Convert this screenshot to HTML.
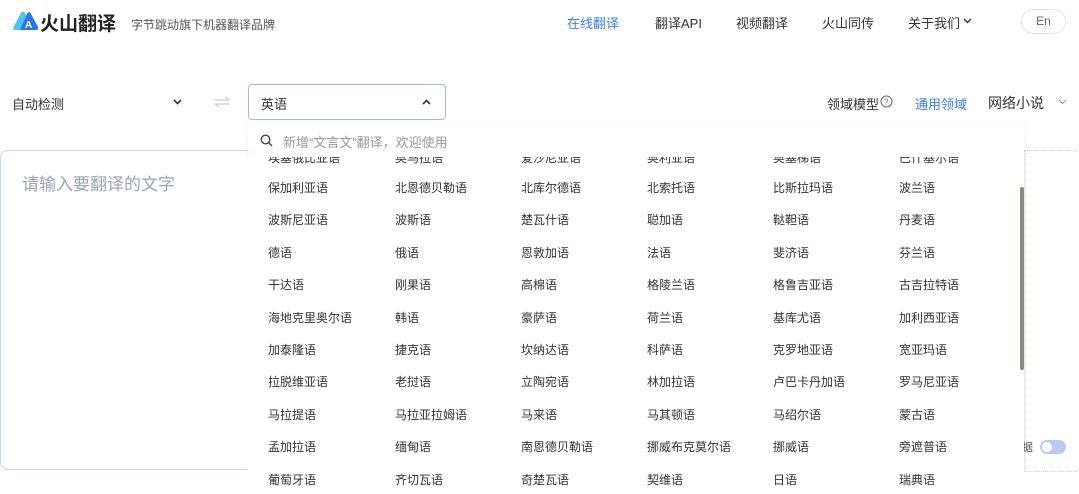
<!DOCTYPE html>
<html><head><meta charset="utf-8"><style>
*{margin:0;padding:0;box-sizing:border-box}
body{width:1079px;height:494px;overflow:hidden;background:#fff;font-family:"Liberation Sans","Noto Sans CJK SC",sans-serif;color:#333;position:relative}
.a{position:absolute;white-space:nowrap}
.nav{font-size:13px;color:#333;top:13px}
.grid{position:absolute;left:248px;top:157px;width:776px;height:337px;overflow:hidden;background:#fff}
.grid span{position:absolute;font-size:12px;color:#333;white-space:nowrap}
</style></head><body>
<svg class="a" style="left:12px;top:9px" width="27" height="23" viewBox="0 0 27 23"><path d="M3 21 Q0 21 2 17 L9 4 Q11 1 13 4 L15 8 L9 21Z" fill="#4cc4f2"/><path d="M8 21 L15 5 Q17 1 19 5 L26 18 Q27 21 24 21Z" fill="#2b74ee"/><text x="13" y="19" font-size="10" fill="#fff" font-family="Liberation Sans" font-weight="bold">A</text></svg>
<div class="a" style="left:40px;top:9px;font-size:19px;font-weight:bold;color:#222">火山翻译</div>
<div class="a" style="left:131px;top:16px;font-size:12px;color:#555">字节跳动旗下机器翻译品牌</div>
<div class="a nav" style="left:567px;color:#3b7ff0">在线翻译</div>
<div class="a nav" style="left:655px">翻译API</div>
<div class="a nav" style="left:736px">视频翻译</div>
<div class="a nav" style="left:822px">火山同传</div>
<div class="a nav" style="left:908px">关于我们</div>
<svg class="a" style="left:963px;top:18px" width="9" height="6" viewBox="0 0 9 6"><path d="M1 1L4.5 4.5L8 1" fill="none" stroke="#333" stroke-width="1.4"/></svg>
<div class="a" style="left:1021px;top:9px;width:45px;height:25px;border:1px solid #e4e4e4;border-radius:13px;font-size:12px;color:#666;text-align:center;line-height:23px">En</div>

<div class="a" style="left:12px;top:94px;font-size:13px">自动检测</div>
<svg class="a" style="left:173px;top:99px" width="9" height="6" viewBox="0 0 9 6"><path d="M1 1L4.5 4.5L8 1" fill="none" stroke="#333" stroke-width="1.6"/></svg>
<svg class="a" style="left:214px;top:96px" width="16" height="12" viewBox="0 0 16 12"><path d="M1 4H15M11 1L15 4M1 8H15M5 11L1 8" fill="none" stroke="#ccc" stroke-width="1.3"/></svg>
<div class="a" style="left:248px;top:84px;width:198px;height:36px;border:1px solid #9db8ee;border-radius:4px"></div>
<div class="a" style="left:261px;top:94px;font-size:13px">英语</div>
<svg class="a" style="left:422px;top:99px" width="9" height="6" viewBox="0 0 9 6"><path d="M1 5L4.5 1.5L8 5" fill="none" stroke="#333" stroke-width="1.6"/></svg>
<div class="a" style="left:827px;top:94px;font-size:13px">领域模型</div>
<svg class="a" style="left:880px;top:95px" width="13" height="13" viewBox="0 0 13 13"><circle cx="6.5" cy="6.5" r="5.5" fill="none" stroke="#666"/><text x="4" y="9.5" font-size="8" fill="#666" font-family="Liberation Sans">?</text></svg>
<div class="a" style="left:915px;top:94px;font-size:13px;color:#3b7ff0">通用领域</div>
<div class="a" style="left:988px;top:93px;font-size:14px">网络小说</div>
<svg class="a" style="left:1058px;top:99px" width="9" height="6" viewBox="0 0 9 6"><path d="M1 1L4.5 4.5L8 1" fill="none" stroke="#999" stroke-width="1.2"/></svg>

<div class="a" style="left:0;top:150px;width:249px;height:320px;border:1px solid #c9d4f2;border-right:none;border-radius:8px 0 0 8px"></div>
<div class="a" style="left:22px;top:170px;font-size:17px;color:#9aa4b8">请输入要翻译的文字</div>
<div class="a" style="left:1024px;top:150px;width:60px;height:322px;border-top:1px dotted #cfd6ea;border-bottom:1px dotted #cfd6ea;border-left:1px dotted #cfd6ea"></div>
<div class="a" style="left:1022px;top:439px;font-size:11px;color:#555">据</div>
<div class="a" style="left:1040px;top:440px;width:26px;height:14px;border-radius:7px;background:#bcc9f3"><div style="margin:2px;width:10px;height:10px;border-radius:5px;background:#fff"></div></div>

<div class="a" style="left:248px;top:124px;width:776px;height:34px;background:#fff;border-bottom:1px solid #eee;box-shadow:0 2px 6px rgba(0,0,0,.06)"></div>
<svg class="a" style="left:260px;top:134px" width="13" height="13" viewBox="0 0 13 13"><circle cx="5.5" cy="5.5" r="4.3" fill="none" stroke="#444" stroke-width="1.4"/><path d="M8.6 8.6L12 12" stroke="#444" stroke-width="1.5"/></svg>
<div class="a" style="left:283px;top:132px;font-size:13px;color:#999">新增“文言文”翻译，欢迎使用</div>
<div class="grid">
<span style="left:20px;top:-8px">埃塞俄比亚语</span><span style="left:147px;top:-8px">奥马拉语</span><span style="left:273px;top:-8px">爱沙尼亚语</span><span style="left:399px;top:-8px">奥利亚语</span><span style="left:525px;top:-8px">奥塞梯语</span><span style="left:651px;top:-8px">巴什基尔语</span>
</div>
<div class="a" style="left:1020px;top:187px;width:4px;height:183px;background:#8a8a78;border-radius:2px"></div>
<script>
const rows=[["保加利亚语","北恩德贝勒语","北库尔德语","北索托语","比斯拉玛语","波兰语"],["波斯尼亚语","波斯语","楚瓦什语","聪加语","鞑靼语","丹麦语"],["德语","俄语","恩敦加语","法语","斐济语","芬兰语"],["干达语","刚果语","高棉语","格陵兰语","格鲁吉亚语","古吉拉特语"],["海地克里奥尔语","韩语","豪萨语","荷兰语","基库尤语","加利西亚语"],["加泰隆语","捷克语","坎纳达语","科萨语","克罗地亚语","宽亚玛语"],["拉脱维亚语","老挝语","立陶宛语","林加拉语","卢巴卡丹加语","罗马尼亚语"],["马拉提语","马拉亚拉姆语","马来语","马其顿语","马绍尔语","蒙古语"],["孟加拉语","缅甸语","南恩德贝勒语","挪威布克莫尔语","挪威语","旁遮普语"],["葡萄牙语","齐切瓦语","奇楚瓦语","契维语","日语","瑞典语"]];
const g=document.querySelector('.grid');const xs=[20,147,273,399,525,651];
rows.forEach((r,i)=>r.forEach((t,j)=>{const s=document.createElement('span');s.textContent=t;s.style.left=xs[j]+'px';s.style.top=(22+i*32.4)+'px';g.appendChild(s);}));
</script>
</body></html>
